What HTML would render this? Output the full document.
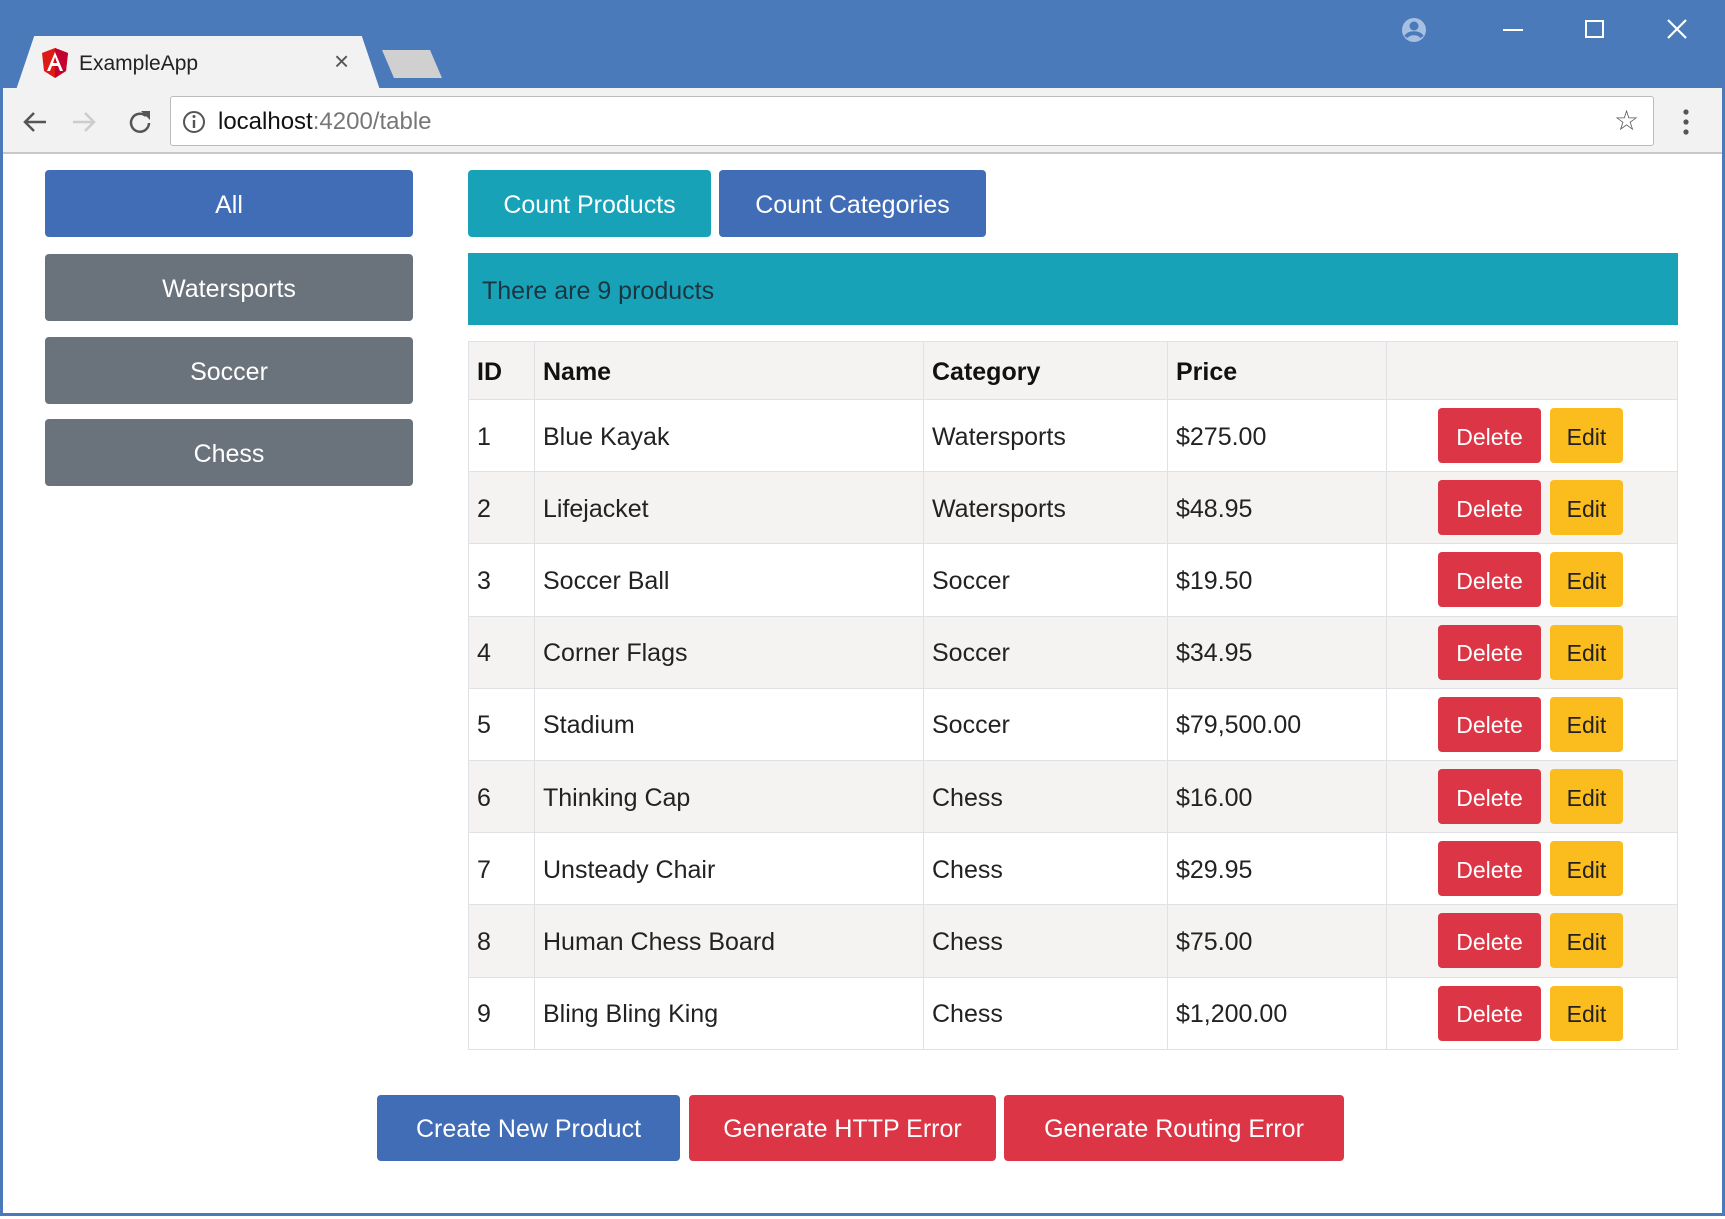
<!DOCTYPE html>
<html><head><meta charset="utf-8"><style>
*{box-sizing:border-box;margin:0;padding:0}
body{width:1725px;height:1219px;overflow:hidden;background:#fff;font-family:"Liberation Sans",sans-serif;position:relative}
.abs{position:absolute}
.frame{left:0;top:0;width:1725px;height:1216px;border:3px solid #4a7aba;border-top:none}
.title{left:0;top:0;width:1725px;height:88px;background:#4a7aba}
.tab{left:16px;top:36px;width:364px;height:54px;background:#f2f2f2;clip-path:polygon(5% 0,95% 0,100% 100%,0 100%);}
.tab2{left:382px;top:50px;width:60px;height:28px;background:#d0d0d0;clip-path:polygon(0 0,80% 0,100% 100%,20% 100%);}
.toolbar{left:3px;top:88px;width:1719px;height:66px;background:#f2f2f2;border-bottom:2px solid #c8c8c8}
.addr{left:170px;top:96px;width:1484px;height:50px;background:#fff;border:1px solid #bbb;border-radius:3px}
.btn{position:absolute;color:#fff;font-size:25px;display:flex;align-items:center;justify-content:center;border-radius:4px;padding-top:3px}
.blue{background:#416db6}.gray{background:#6a737b}.teal{background:#17a2b8}.red{background:#dc3545}.yel{background:#fbbd1e;color:#222}
table{position:absolute;left:468px;top:341px;width:1210px;border-collapse:collapse;font-size:25px;color:#222}
td,th{border:1.5px solid #dfe1e4;padding:3px 8px 0;text-align:left}
th{height:58px;background:#f4f3f2;font-weight:bold;color:#111}
td{height:72.2px}
tr:nth-child(odd) td{background:#f4f3f2}
</style></head><body>
<div class="abs title"></div>
<div class="abs tab"></div>
<div class="abs tab2"></div>
<svg class="abs" style="left:41px;top:48px" width="28" height="30" viewBox="0 0 28 30"><path d="M14 0L27 5 25 23 14 30 3 23 1 5Z" fill="#dd1b16"/><path d="M14 0L27 5 25 23 14 30Z" fill="#c3002f"/><path d="M14 4L6 23h3l2-5h6l2 5h3ZM12 15l2-6 2 6Z" fill="#fff"/></svg>
<div class="abs" style="left:79px;top:52px;font-size:21px;color:#222">ExampleApp</div>
<div class="abs" style="left:334px;top:46px;font-size:26px;color:#555">×</div>
<svg class="abs" style="left:1400px;top:16px" width="28" height="28"><circle cx="14" cy="14" r="12" fill="#a7c0e2"/><circle cx="14" cy="10" r="4.5" fill="#4a7aba"/><path d="M6 21c3-5 13-5 16 0" stroke="#4a7aba" stroke-width="4" fill="none"/></svg>
<div class="abs" style="left:1503px;top:29px;width:20px;height:2px;background:#fff"></div>
<div class="abs" style="left:1585px;top:20px;width:19px;height:18px;border:2px solid #fff"></div>
<svg class="abs" style="left:1666px;top:18px" width="22" height="22"><path d="M2 2L20 20M20 2L2 20" stroke="#fff" stroke-width="2.2"/></svg>
<div class="abs toolbar"></div>
<svg class="abs" style="left:20px;top:108px" width="150" height="28"><path d="M26 14H5M14 5L5 14l9 9" stroke="#555" stroke-width="2.5" fill="none"/><path d="M74 14H53M65 5l9 9-9 9" stroke="#ccc" stroke-width="2.5" fill="none"/><path d="M126 8a9 9 0 1 0 3 7" stroke="#555" stroke-width="2.5" fill="none"/><path d="M121 3h9v9z" fill="#555"/></svg>
<div class="abs addr"></div>
<svg class="abs" style="left:182px;top:110px" width="24" height="24"><circle cx="12" cy="12" r="10" stroke="#555" stroke-width="2" fill="none"/><path d="M12 10v8" stroke="#555" stroke-width="2.4"/><circle cx="12" cy="6.5" r="1.5" fill="#555"/></svg>
<div class="abs" style="left:218px;top:108px;font-size:24px;color:#111">localhost<span style="color:#777">:4200/table</span></div>
<div class="abs" style="left:1614px;top:104px;font-size:28px;color:#555">☆</div>
<svg class="abs" style="left:1682px;top:108px" width="8" height="28"><circle cx="4" cy="4" r="2.6" fill="#555"/><circle cx="4" cy="14" r="2.6" fill="#555"/><circle cx="4" cy="24" r="2.6" fill="#555"/></svg>
<div class="abs frame"></div>

<div class="btn blue" style="left:45px;top:170px;width:368px;height:67px">All</div>
<div class="btn gray" style="left:45px;top:254px;width:368px;height:67px">Watersports</div>
<div class="btn gray" style="left:45px;top:337px;width:368px;height:67px">Soccer</div>
<div class="btn gray" style="left:45px;top:419px;width:368px;height:67px">Chess</div>
<div class="btn teal" style="left:468px;top:170px;width:243px;height:67px">Count Products</div>
<div class="btn blue" style="left:719px;top:170px;width:267px;height:67px">Count Categories</div>
<div class="abs teal" style="left:468px;top:253px;width:1210px;height:72px;background:#17a2b8;color:#1c3540;font-size:25px;padding:24px 14px">There are 9 products</div>

<table>
<tr><th style="width:66px">ID</th><th style="width:389px">Name</th><th style="width:244px">Category</th><th style="width:219px">Price</th><th></th></tr>
<tr><td>1</td><td>Blue Kayak</td><td>Watersports</td><td>$275.00</td><td></td></tr>
<tr><td>2</td><td>Lifejacket</td><td>Watersports</td><td>$48.95</td><td></td></tr>
<tr><td>3</td><td>Soccer Ball</td><td>Soccer</td><td>$19.50</td><td></td></tr>
<tr><td>4</td><td>Corner Flags</td><td>Soccer</td><td>$34.95</td><td></td></tr>
<tr><td>5</td><td>Stadium</td><td>Soccer</td><td>$79,500.00</td><td></td></tr>
<tr><td>6</td><td>Thinking Cap</td><td>Chess</td><td>$16.00</td><td></td></tr>
<tr><td>7</td><td>Unsteady Chair</td><td>Chess</td><td>$29.95</td><td></td></tr>
<tr><td>8</td><td>Human Chess Board</td><td>Chess</td><td>$75.00</td><td></td></tr>
<tr><td>9</td><td>Bling Bling King</td><td>Chess</td><td>$1,200.00</td><td></td></tr>
</table>
<div id="acts"></div>
<script>
var h='';for(var i=0;i<9;i++){var t=408+i*72.2;h+='<div class="btn red" style="left:1438px;top:'+t+'px;width:103px;height:55px;font-size:23px">Delete</div><div class="btn yel" style="left:1550px;top:'+t+'px;width:73px;height:55px;font-size:23px">Edit</div>';}
document.getElementById('acts').innerHTML=h;
</script>
<div class="btn blue" style="left:377px;top:1095px;width:303px;height:66px">Create New Product</div>
<div class="btn red" style="left:689px;top:1095px;width:307px;height:66px">Generate HTTP Error</div>
<div class="btn red" style="left:1004px;top:1095px;width:340px;height:66px">Generate Routing Error</div>
</body></html>
